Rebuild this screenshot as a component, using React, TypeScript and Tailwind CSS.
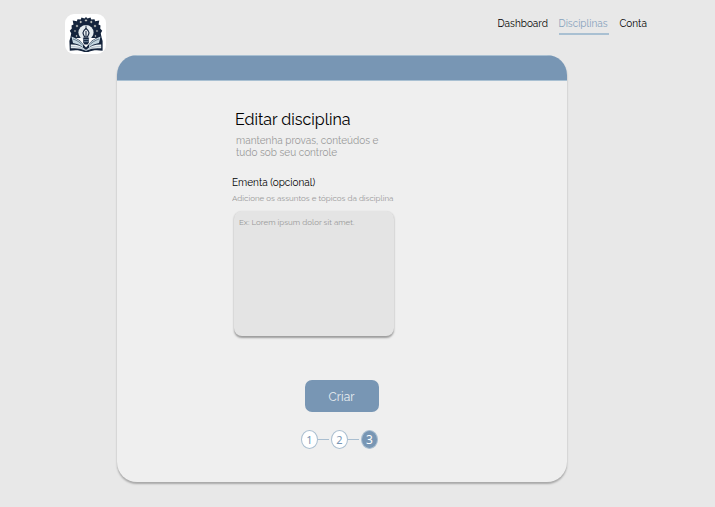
import React from "react";

const stars: [number, number, number][] = [
  [20, 6.4, 1.1],
  [14.8, 8, 1],
  [25.2, 8, 1],
  [11, 12, 1],
  [29, 12, 1],
  [9, 17, 0.9],
  [31, 17, 0.9],
  [10.6, 22, 0.9],
  [29.4, 22, 0.9],
];

function Logo() {
  return (
    <svg viewBox="0 0 40 40" className="h-10 w-10" aria-label="Logo">
      <g fill="#14243c">
        <path d="M20 3l1.500 1.600 3-1 .8 1.800 3.200-.1.600 2 4.200-.8-.8 4 2 1-.3 3 2 2.300-1.400 2.400.5 3.300-2 1.500H6.700l-2-1.500.5-3.300-1.400-2.400 2-2.300-.3-3 2-1-.8-4 4.200.8.600-2 3.200.1.800-1.800 3 1Z" />
        <path d="M3.400 27 5 21.500l4 2 5 3 6 7 6-7 5-3 4-2 1.600 5.500v9.700c-6-1-10-.6-14.400 1.300h-4c-4.400-1.900-8.400-2.300-14.400-1.300Z" />
      </g>
      <circle cx="20" cy="18.500" r="7.600" fill="#e6edf0" />
      <g fill="#f5f2e5">
        {stars.map(([x, y, r]) => (
          <path
            key={`${x}-${y}`}
            d={`M${x} ${y - r * 1.5}L${x + r * 0.4} ${y - r * 0.4}L${x + r * 1.5} ${y}L${x + r * 0.4} ${y + r * 0.4}L${x} ${y + r * 1.5}L${x - r * 0.4} ${y + r * 0.4}L${x - r * 1.5} ${y}L${x - r * 0.4} ${y - r * 0.4}Z`}
          />
        ))}
      </g>
      <path d="M5.500 22.500c4.500 1.800 9 4 11.500 8v3c-3-2.500-6-3.700-10-4.500ZM34.500 22.500c-4.500 1.800-9 4-11.500 8v3c3-2.500 6-3.700 10-4.500Z" fill="#c3d6e0" />
      <path d="M7 25c4 1.500 7.500 3.500 10 6.500M33 25c-4 1.500-7.500 3.500-10 6.500" stroke="#14243c" strokeWidth=".5" fill="none" />
      <path d="M4.800 30.500c6-.2 11 1.500 15.200 5.500 4.200-4 9.200-5.700 15.200-5.500v3.800c-5.700-.5-10.200 0-15.200 2.500-5-2.500-9.500-3-15.200-2.500Z" fill="#eef3f5" />
      <path d="M5 32.700c6-.3 10.500.7 15 3.700 4.500-3 9-4 15-3.700" stroke="#6a879f" strokeWidth=".5" fill="none" />
      <path d="M20 11.500V15" stroke="#14243c" strokeWidth=".9" />
      <path d="M20 14.500c-1.800 1.400-3 2.500-3 4.200 0 1.500.9 2.600 1.500 4.100h3c.6-1.500 1.500-2.600 1.500-4.100 0-1.700-1.200-2.800-3-4.200Z" fill="none" stroke="#14243c" strokeWidth="1.200" />
      <path d="M20 17v5" stroke="#14243c" strokeWidth="1" />
      <path d="M17.200 23.500h5.600v5.300l-1.300 1.700h-3l-1.300-1.700Z" fill="#14243c" />
      <path d="M17.500 25.600h5M17.700 27.700h4.600" stroke="#a9c3d3" strokeWidth=".6" />
    </svg>
  );
}

function Step({ n, active = false }: { n: number; active?: boolean }) {
  return (
    <span
      className={
        active
          ? "flex h-[19px] w-[17px] items-center justify-center rounded-[50%] border border-[#a9bed0] bg-[#7896b4] font-['Noto_Sans',sans-serif] text-[12px] leading-none text-white"
          : "flex h-[19px] w-[17px] items-center justify-center rounded-[50%] border border-[#a9bed0] bg-white font-['Noto_Sans',sans-serif] text-[11px] leading-none text-[#7896b4]"
      }
    >
      <span className="scale-y-[1.02]">{n}</span>
    </span>
  );
}

export default function App() {
  return (
    <div className="h-[507px] w-[715px] overflow-hidden bg-[#e8e8e8] font-['Raleway','Lato',sans-serif] text-black">
      <header className="flex h-[55px] items-start justify-between pr-[67.500px] pl-[65px]">
        <div className="mt-[14px] flex h-10 w-[41px] items-center justify-center rounded-[9px] bg-white">
          <Logo />
        </div>
        <nav className="mt-[16px] flex gap-[11px] text-[10px] leading-[15px] whitespace-nowrap">
          <a className="w-[50px]"><span className="block scale-y-[1.04]">Dashboard</span></a>
          <a className="h-[19px] w-[50px] border-b-2 border-[#a9c0d2] text-[#86a2bc]"><span className="block scale-y-[1.04]">Disciplinas</span></a>
          <a className="w-[28px]"><span className="block scale-y-[1.04]">Conta</span></a>
        </nav>
      </header>
      <main className="ml-[117px] flex h-[426.500px] w-[450px] flex-col overflow-hidden rounded-[20px] bg-[#efefef] shadow-[0_2px_2px_rgba(0,0,0,0.28)]">
        <div className="h-[26px] shrink-0 border-y border-[#a9c0d2] bg-[#7896b4]" />
        <section className="ml-[115px] flex flex-col whitespace-nowrap">
          <h1 className="mt-[29px] ml-[3px] scale-y-[1.02] text-[16px] leading-[20px]">Editar disciplina</h1>
          <p className="mt-[5px] ml-1 scale-y-[1.02] text-[10px] leading-[11.500px] text-[#999]">
            mantenha provas, conteúdos e<br />
            tudo sob seu controle
          </p>
          <label className="mt-[18px] scale-y-[1.02] text-[10px] leading-[14px]">Ementa (opcional)</label>
          <p className="mt-[3px] scale-y-[1.02] text-[8px] leading-[11px] text-[#999]">Adicione os assuntos e tópicos da disciplina</p>
          <div className="mt-[7px] ml-[1.500px] h-[125px] w-[160px] rounded-[8px] bg-[#e4e4e4] px-[5.500px] pt-[6px] text-[8px] leading-[11px] text-[#999] shadow-[0_1.500px_2px_rgba(0,0,0,0.35)]">
            <span className="block scale-y-[1.02]">Ex: Lorem ipsum dolor sit amet.</span>
          </div>
        </section>
        <button className="mt-[43.500px] ml-[188px] h-[32.500px] w-[74px] shrink-0 rounded-[7px] bg-[#7896b4] pt-[2px] pr-[1px] text-[12px] text-[#e9eef2]"><span className="block scale-y-[1.02]">Criar</span></button>
        <div className="mt-[18px] ml-[184px] flex items-center">
          <Step n={1} />
          <span className="h-px w-[11px] bg-[#a9bed0]" />
          <span className="w-[2px]" />
          <Step n={2} />
          <span className="h-px w-[11px] bg-[#a9bed0]" />
          <span className="w-[2px]" />
          <Step n={3} active />
        </div>
      </main>
    </div>
  );
}
